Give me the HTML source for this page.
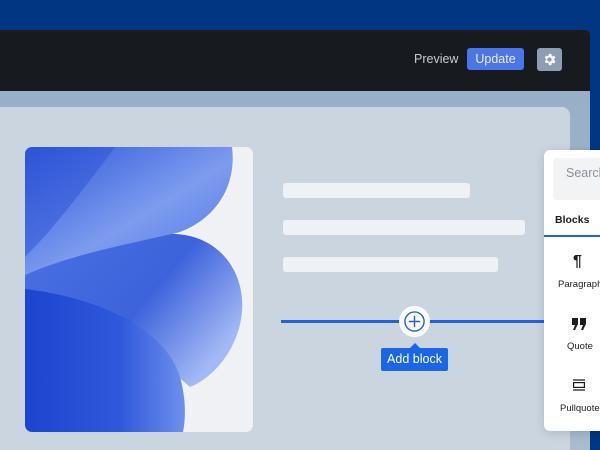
<!DOCTYPE html>
<html><head><style>
*{margin:0;padding:0;box-sizing:border-box}
html,body{width:600px;height:450px;overflow:hidden}
body{background:#013683;font-family:"Liberation Sans",sans-serif;position:relative}
.abs{position:absolute}
</style></head><body>
<div class="abs" style="left:0;top:90px;width:590px;height:360px;background:linear-gradient(180deg,#98afc8,#a9bbcf)"></div>
<div class="abs" style="left:0;top:30px;width:590px;height:61px;background:#171a1f;border-radius:0 5px 0 0"></div>
<div class="abs" style="left:414px;top:52px;color:#c9cdd3;font-size:12.5px">Preview</div>
<div class="abs" style="left:467px;top:48px;width:57px;height:22px;background:#4a76e8;border-radius:3px;color:#e8eefc;font-size:12.5px;text-align:center;line-height:22px">Update</div>
<div class="abs" style="left:537px;top:48px;width:25px;height:23px;background:#8d9db3;border-radius:3px"></div>
<svg class="abs" style="left:542px;top:52px" width="15" height="15" viewBox="0 0 24 24"><path fill="#fff" d="M19.4 13a7.5 7.5 0 000-2l2.1-1.6-2-3.5-2.5 1a7 7 0 00-1.7-1L15 3h-4l-.4 2.7a7 7 0 00-1.7 1l-2.5-1-2 3.5L6.6 11a7.5 7.5 0 000 2l-2.1 1.6 2 3.5 2.5-1a7 7 0 001.7 1L11 21h4l.4-2.7a7 7 0 001.7-1l2.5 1 2-3.5zM12 15.5a3.5 3.5 0 110-7 3.5 3.5 0 010 7z"/></svg>
<div class="abs" style="left:-10px;top:107px;width:580px;height:343px;background:#cad5e0;border-radius:8px 8px 0 0"></div>
<svg class="abs" style="left:25px;top:147px;border-radius:7px" width="228" height="285" viewBox="0 0 228 285">
<defs>
<linearGradient id="g1" x1="0" y1="0" x2="1" y2="1"><stop offset="0" stop-color="#2d55d8"/><stop offset=".55" stop-color="#7d9cef"/><stop offset="1" stop-color="#4d74e3"/></linearGradient>
<linearGradient id="g2" x1="0" y1="0" x2="1" y2=".6"><stop offset="0" stop-color="#4a70e2"/><stop offset=".6" stop-color="#3d63dc"/><stop offset="1" stop-color="#a3b8f4"/></linearGradient>
<linearGradient id="g3" x1="0" y1="0" x2="1" y2="0"><stop offset="0" stop-color="#1c44cf"/><stop offset=".6" stop-color="#2f59db"/><stop offset="1" stop-color="#6f90ec"/></linearGradient>
</defs>
<rect width="228" height="285" fill="#eff1f5"/>
<path fill="url(#g2)" d="M0,110 C60,95 120,82 160,88 C200,95 220,130 217,165 C214,200 190,230 165,240 C120,200 60,170 0,160Z"/>
<path fill="url(#g3)" d="M0,142 C70,150 140,180 155,230 C162,255 160,275 158,285 L0,285Z"/>
<path fill="url(#g1)" d="M0,0 L207,0 C212,40 190,72 155,85 C110,96 50,106 0,128Z"/>
<path fill="#2b52d6" opacity=".5" d="M0,0 L90,0 C60,40 30,80 0,110Z"/>
</svg>
<div class="abs" style="left:283px;top:183px;width:187px;height:15px;background:#eef1f5;border-radius:3px"></div>
<div class="abs" style="left:283px;top:220px;width:242px;height:15px;background:#eef1f5;border-radius:3px"></div>
<div class="abs" style="left:283px;top:257px;width:215px;height:15px;background:#eef1f5;border-radius:3px"></div>
<div class="abs" style="left:281px;top:320px;width:265px;height:3px;background:#2062e2"></div>
<div class="abs" style="left:399px;top:306px;width:31px;height:31px;background:#fff;border-radius:50%"></div>
<svg class="abs" style="left:403px;top:310px" width="23" height="23" viewBox="0 0 24 24"><circle cx="12" cy="12" r="10" fill="none" stroke="#2a5fd9" stroke-width="1.5"/><path d="M12 6v12M6 12h12" stroke="#2a5fd9" stroke-width="1.5"/></svg>
<div class="abs" style="left:410px;top:343px;width:0;height:0;border-left:5px solid transparent;border-right:5px solid transparent;border-bottom:5px solid #1a66e6"></div>
<div class="abs" style="left:381px;top:348px;width:67px;height:23px;background:#1a66e6;border-radius:2px;color:#fff;font-size:12.5px;text-align:center;line-height:23px">Add block</div>
<div class="abs" style="left:544px;top:150px;width:70px;height:281px;background:#fff;border-radius:6px;box-shadow:0 2px 10px rgba(0,0,0,.15);overflow:hidden">
<div class="abs" style="left:9px;top:8px;width:60px;height:42px;background:#f1f3f5;border-radius:4px"></div>
<div class="abs" style="left:22px;top:16px;color:#8a9099;font-size:12.5px">Search</div>
<div class="abs" style="left:11px;top:64px;color:#1e1e1e;font-size:10.5px;font-weight:bold">Blocks</div>
<div class="abs" style="left:0;top:85px;width:70px;height:2px;background:#2062e2"></div>
<div class="abs" style="left:29px;top:103px;color:#1e1e1e;font-size:16px;font-weight:bold">¶</div>
<div class="abs" style="left:14px;top:129px;color:#1e1e1e;font-size:9.5px">Paragraph</div>
<svg class="abs" style="left:28px;top:168px" width="15" height="12" viewBox="0 0 15 12"><path fill="#1e1e1e" d="M0 0h6v6l-3 6H1l2-5H0zM8 0h6v6l-3 6H9l2-5H8z"/></svg>
<div class="abs" style="left:23px;top:191px;color:#1e1e1e;font-size:9.5px">Quote</div>
<svg class="abs" style="left:28px;top:229px" width="14" height="12" viewBox="0 0 14 12"><path d="M1 1h12M1 11h12" stroke="#1e1e1e" stroke-width="1.2"/><rect x="1.6" y="3.6" width="10.8" height="4.8" fill="none" stroke="#1e1e1e" stroke-width="1.2"/></svg>
<div class="abs" style="left:16px;top:253px;color:#1e1e1e;font-size:9.5px">Pullquote</div>
</div>
</body></html>
